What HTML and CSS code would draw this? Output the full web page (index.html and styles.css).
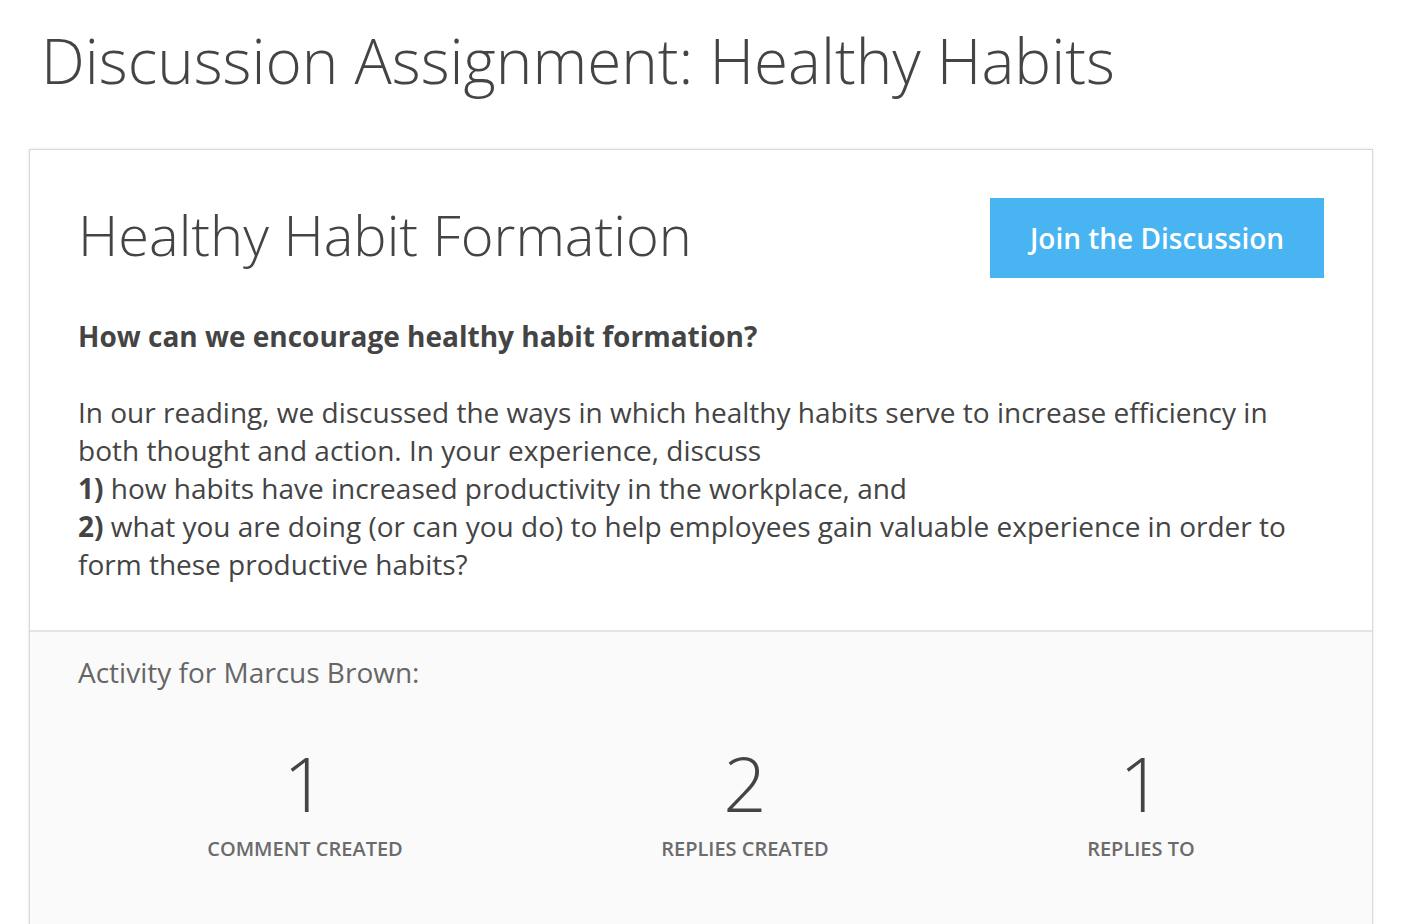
FILE: index.html
```html
<!DOCTYPE html>
<html lang="en">
<head>
<meta charset="utf-8">
<title>Discussion Assignment: Healthy Habits</title>
<link rel="stylesheet" href="styles.css">
</head>
<body>
<div class="page">
  <h1 class="page-title">Discussion Assignment: Healthy Habits</h1>
  <section class="card">
    <div class="card-main">
      <div class="card-head">
        <h2 class="card-title">Healthy Habit Formation</h2>
        <button class="join-btn" type="button">Join the Discussion</button>
      </div>
      <div class="prompt">
        <p class="question">How can we encourage healthy habit formation?</p>
        <p class="blank">&nbsp;</p>
        <p>In our reading, we discussed the ways in which healthy habits serve to increase efficiency in both thought and action. In your experience, discuss<br><b>1)</b> how habits have increased productivity in the workplace, and<br><b>2)</b> what you are doing (or can you do) to help employees gain valuable experience in order to form these productive habits?</p>
      </div>
    </div>
    <div class="card-activity">
      <p class="activity-title">Activity for Marcus Brown:</p>
      <div class="stats">
        <div class="stat"><div class="stat-num">1</div><div class="stat-label">Comment Created</div></div>
        <div class="stat"><div class="stat-num">2</div><div class="stat-label">Replies Created</div></div>
        <div class="stat"><div class="stat-num">1</div><div class="stat-label">Replies To</div></div>
      </div>
    </div>
  </section>
</div>
</body>
</html>
```
FILE: styles.css
```css
* { box-sizing: border-box; }
html, body { margin: 0; padding: 0; background: #fff; }
body {
  font-family: "Open Sans", "Liberation Sans", sans-serif;
  color: #444;
  overflow: hidden;
}
.page {
  padding: 17px 29px 0 29px;
}
.page-title {
  margin: 0 0 46px 0;
  padding-left: 12px;
  font-size: 62px;
  font-weight: 300;
  line-height: 86px;
  color: #444;
}
.card {
  border: 1px solid #d9d9d9;
  box-shadow: 0 0 3px rgba(0,0,0,0.12);
  background: #fff;
  min-height: 800px;
}
.card-main {
  padding: 48px 48px 47px 48px;
  border-bottom: 2px solid #e3e3e3;
}
.card-head {
  display: flex;
  justify-content: space-between;
  align-items: center;
  margin-bottom: 39px;
}
.card-title {
  margin: -9px 0 0 0;
  font-size: 56px;
  font-weight: 300;
  color: #444;
  line-height: 72px;
}
.join-btn {
  width: 334px;
  height: 80px;
  border: 0;
  border-radius: 0;
  background: #48b4f2;
  color: #fff;
  font-family: "Open Sans", "Liberation Sans", sans-serif;
  font-weight: 600;
  font-size: 28px;
  padding: 0;
  margin-top: 0;
}
.prompt p {
  margin: 0;
  font-size: 28px;
  line-height: 38px;
  color: #444;
}
.prompt .question { font-weight: 700; font-size: 28px; }
.prompt b { font-weight: 700; }
.card-activity {
  background: #fafafa;
  padding: 21px 48px 60px 48px;
  min-height: 400px;
}
.activity-title {
  margin: 0;
  font-size: 28px;
  line-height: 38px;
  color: #666;
}
.stats {
  display: flex;
  justify-content: space-around;
  margin-top: 54px;
}
.stat {
  display: flex;
  flex-direction: column;
  align-items: center;
}
.stat-num {
  font-size: 76px;
  font-weight: 300;
  line-height: 76px;
  color: #444;
}
.stat-label {
  margin-top: 16px;
  font-size: 20px;
  line-height: 24px;
  font-weight: 600;
  text-transform: uppercase;
  color: #6b6b6b;
}
```
